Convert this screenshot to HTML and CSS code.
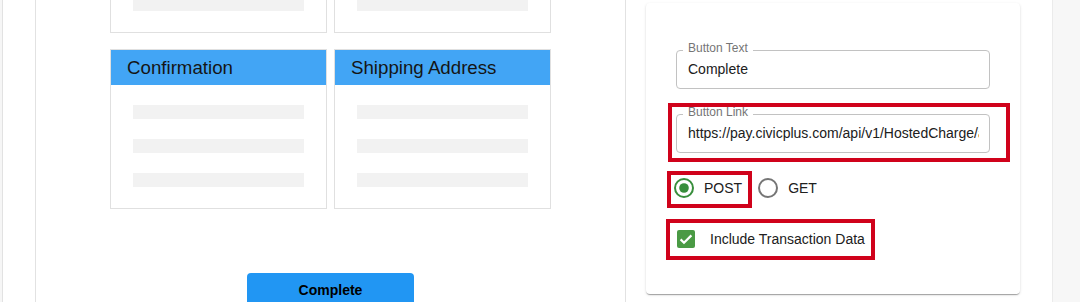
FILE: index.html
```html
<!DOCTYPE html>
<html lang="en">
<head>
<meta charset="utf-8">
<title>Form Builder – Complete Button</title>
<link rel="stylesheet" href="styles.css">
</head>
<body>
<div class="page">
  <div class="gutter-left"></div>
  <div class="rail"></div>

  <section class="preview">
    <div class="steps">
      <div class="step">
        <div class="step-head"></div>
        <div class="step-body"><span class="bar"></span><span class="bar"></span><span class="bar"></span></div>
      </div>
      <div class="step">
        <div class="step-head"></div>
        <div class="step-body"><span class="bar"></span><span class="bar"></span><span class="bar"></span></div>
      </div>
      <div class="step">
        <div class="step-head">Confirmation</div>
        <div class="step-body"><span class="bar"></span><span class="bar"></span><span class="bar"></span></div>
      </div>
      <div class="step">
        <div class="step-head">Shipping Address</div>
        <div class="step-body"><span class="bar"></span><span class="bar"></span><span class="bar"></span></div>
      </div>
    </div>
    <button class="complete-btn" type="button">Complete</button>
  </section>

  <section class="settings">
    <div class="panel">
      <fieldset class="field">
        <legend>Button Text</legend>
        <input class="field-input" type="text" value="Complete" readonly>
      </fieldset>
      <fieldset class="field field-link">
        <legend>Button Link</legend>
        <input class="field-input" type="text" value="https://pay.civicplus.com/api/v1/HostedCharge/authorize" readonly>
      </fieldset>

      <div class="methods">
        <label class="choice choice-post">
          <svg class="radio" width="20" height="20" viewBox="0 0 20 20"><circle cx="10" cy="10" r="9" fill="none" stroke="#388e3c" stroke-width="2"/><circle cx="10" cy="10" r="4.8" fill="#388e3c"/></svg>
          <span>POST</span>
        </label>
        <label class="choice">
          <svg class="radio" width="20" height="20" viewBox="0 0 20 20"><circle cx="10" cy="10" r="9" fill="none" stroke="#757575" stroke-width="2"/></svg>
          <span>GET</span>
        </label>
      </div>

      <label class="check">
        <svg class="checkbox" width="18" height="18" viewBox="0 0 18 18"><rect width="18" height="18" rx="2" fill="#4a9a44"/><path d="M3.6 9.4 L7 12.8 L14.4 5.4" fill="none" stroke="#ffffff" stroke-width="2.2"/></svg>
        <span>Include Transaction Data</span>
      </label>

      <div class="mark mark-link"></div>
      <div class="mark mark-method"></div>
      <div class="mark mark-check"></div>
    </div>
  </section>

  <div class="gutter-right"></div>
</div>
</body>
</html>
```

FILE: styles.css
```css
* {
  box-sizing: border-box;
}

html, body {
  margin: 0;
  padding: 0;
  height: 302px;
  overflow: hidden;
  background: #ffffff;
  font-family: "Liberation Sans", Arial, sans-serif;
  color: #212121;
}

.page {
  display: flex;
  height: 302px;
  width: 1080px;
}

.gutter-left {
  width: 3px;
  flex: none;
  background: #f6f6f6;
  border-right: 1px solid #e2e2e2;
}

.rail {
  width: 33px;
  flex: none;
  border-right: 1px solid #e2e2e2;
}

.preview {
  width: 590px;
  flex: none;
  border-right: 1px solid #e2e2e2;
  display: flex;
  flex-direction: column;
  align-items: center;
}

.steps {
  margin-top: -127px;
  display: grid;
  grid-template-columns: 217px 217px;
  column-gap: 7px;
  row-gap: 16px;
}

.step {
  border: 1px solid #e0e0e0;
  background: #ffffff;
}

.step-head {
  height: 35px;
  background: #42a5f5;
  display: flex;
  align-items: center;
  padding-left: 16px;
  font-size: 18.7px;
  color: #151515;
  white-space: nowrap;
}

.step-body {
  padding: 20px 22px 21px;
  display: flex;
  flex-direction: column;
  gap: 20px;
}

.bar {
  display: block;
  height: 14px;
  background: #f2f2f2;
}

.complete-btn {
  margin-top: 64px;
  width: 167px;
  height: 36px;
  border: none;
  border-radius: 4px;
  background: #2196f3;
  color: #000000;
  font-family: "Liberation Sans", Arial, sans-serif;
  font-size: 14px;
  font-weight: bold;
  padding: 0 0 2px;
  flex: none;
}

.settings {
  width: 426px;
  flex: none;
  padding: 3px 32px 0 20px;
}

.panel {
  position: relative;
  height: 291px;
  background: #ffffff;
  border-radius: 4px;
  box-shadow: 0 2px 1px -1px rgba(0, 0, 0, 0.2), 0 1px 1px 0 rgba(0, 0, 0, 0.14), 0 1px 3px 0 rgba(0, 0, 0, 0.12);
  padding: 38px 30px 0;
}

.field {
  margin: 0;
  min-width: 0;
  border: 1px solid #c2c2c2;
  border-radius: 4px;
  padding: 0 10px 9px 6px;
}

.field legend {
  padding: 0 5px 4px;
  font-size: 12px;
  line-height: 14px;
  color: #757575;
}

.field-link {
  margin-top: 16px;
}

.field-input {
  display: block;
  width: 100%;
  height: 20px;
  border: none;
  outline: none;
  background: transparent;
  padding: 0 0 0 5px;
  margin: 0;
  font-family: "Liberation Sans", Arial, sans-serif;
  font-size: 14px;
  line-height: 20px;
  color: #202020;
}

.methods {
  margin-top: 21px;
  height: 28px;
  display: flex;
  align-items: center;
  gap: 16px;
  margin-left: -2px;
}

.choice {
  display: flex;
  align-items: center;
  gap: 10px;
  font-size: 14px;
  color: #202020;
}

.radio,
.checkbox {
  display: block;
  flex: none;
}

.check {
  margin-top: 23px;
  height: 28px;
  display: flex;
  align-items: center;
  gap: 15px;
  margin-left: 1px;
  font-size: 14px;
  color: #202020;
}

.mark {
  position: absolute;
  border: 4px solid #d0021b;
}

.mark-link {
  left: 22px;
  top: 100px;
  width: 342px;
  height: 59px;
}

.mark-method {
  left: 21px;
  top: 168px;
  width: 85px;
  height: 37px;
}

.mark-check {
  left: 20px;
  top: 216px;
  width: 209px;
  height: 41px;
}

.gutter-right {
  flex: 1;
  background: #f7f7f7;
  border-left: 1px solid #ebebeb;
}
```
